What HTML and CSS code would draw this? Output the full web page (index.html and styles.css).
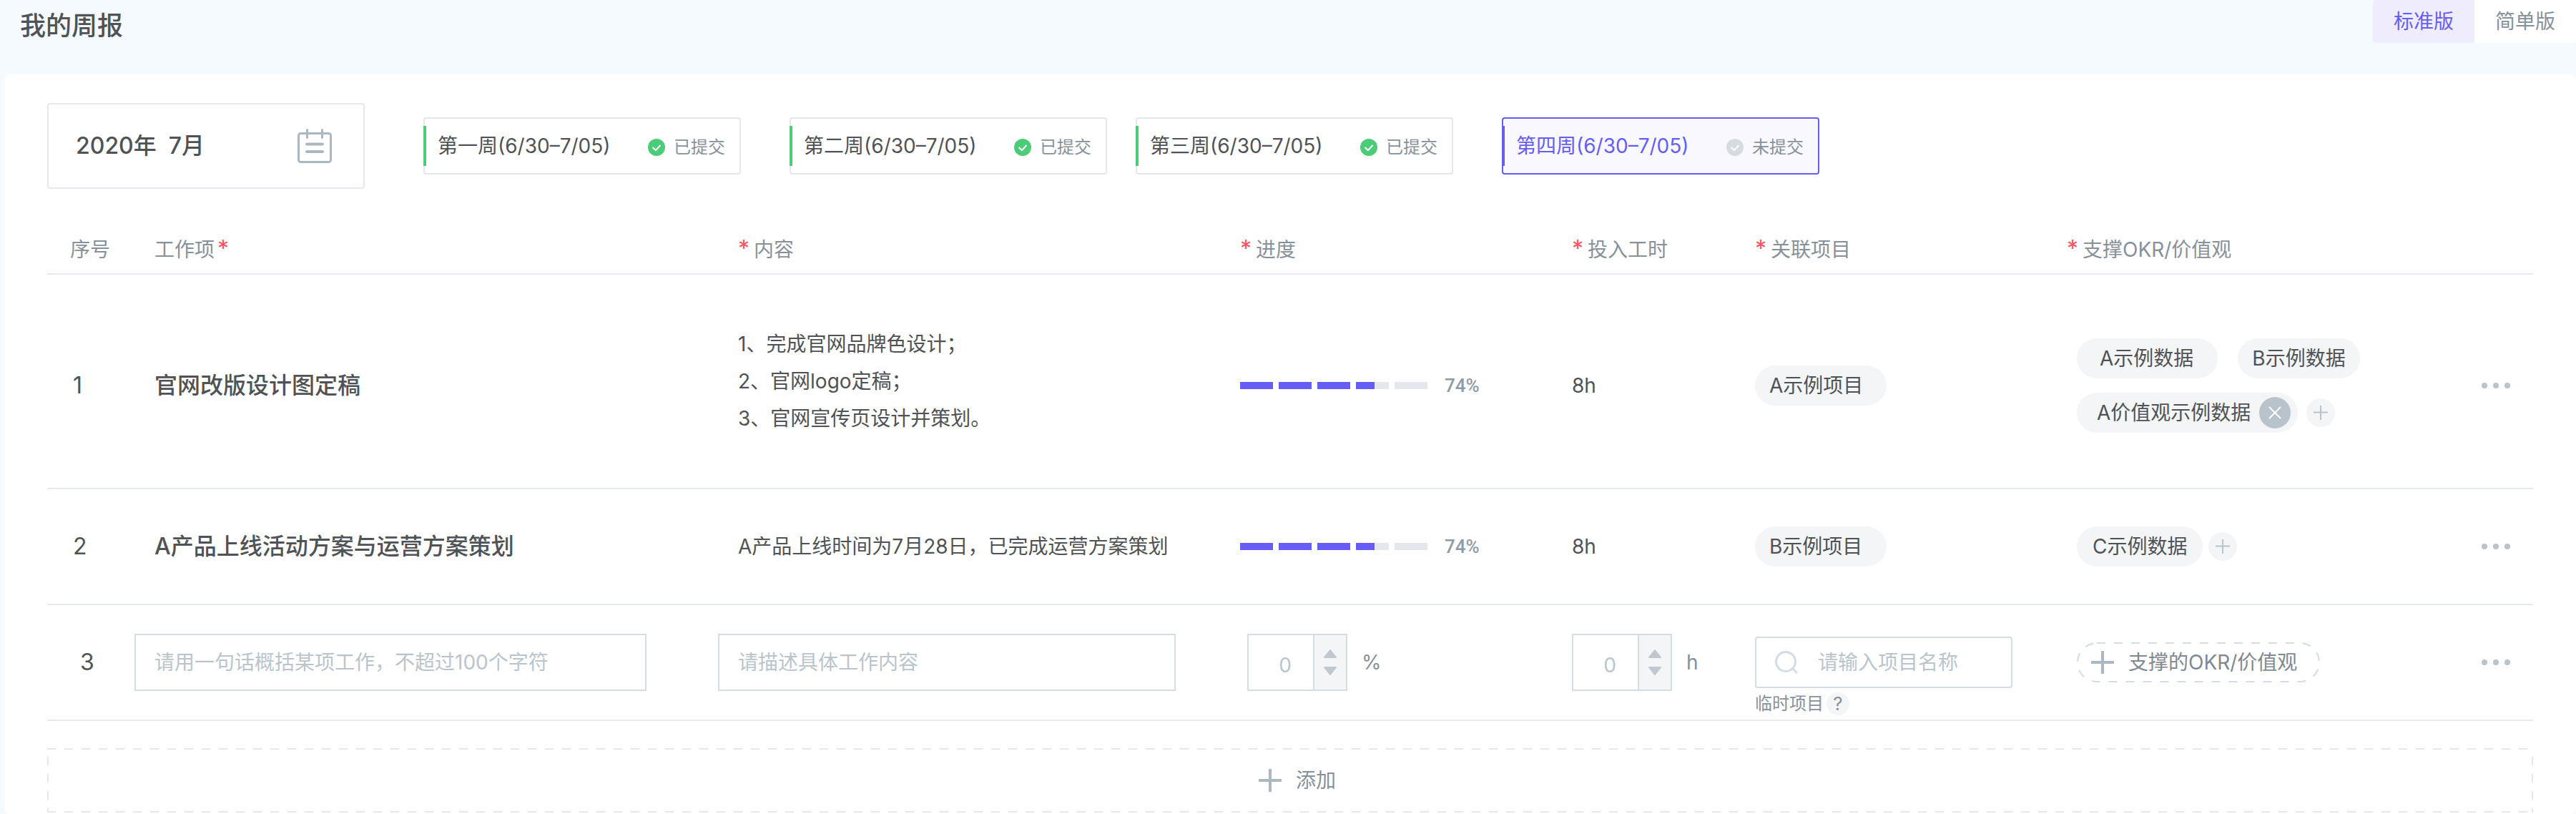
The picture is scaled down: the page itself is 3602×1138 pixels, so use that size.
FILE: index.html
```html
<!DOCTYPE html>
<html lang="zh-CN">
<head>
<meta charset="utf-8">
<title>我的周报</title>
<link rel="stylesheet" href="styles.css">
</head>
<body>
<header class="page-header">
  <h1 class="page-title">我的周报</h1>
  <nav class="modes">
    <button type="button" class="mode mode-active">标准版</button>
    <button type="button" class="mode">简单版</button>
  </nav>
</header>
<main class="card">
  <div class="toolbar">
    <button type="button" class="month">
      <span class="month-text">2020年&nbsp; 7月</span>
      <svg class="month-icon" viewBox="0 0 48 48" width="48" height="48" fill="none" stroke="#abb7c1" stroke-width="3" stroke-linecap="round"><rect x="1.500" y="6.500" width="45" height="40" rx="3"/><path d="M13.500 1.500v11M34.500 1.500v11"/><path d="M13 21.500h22M13 32h22" stroke-width="4"/></svg>
    </button>
    <div class="weeks">
      <button type="button" class="week"><span>第一周(6/30–7/05)</span><span class="status"><svg class="check" viewBox="0 0 24 24" width="24" height="24"><circle cx="12" cy="12" r="12"/><path d="M6.500 12l4.500 4 6.500-7"/></svg>已提交</span></button>
      <button type="button" class="week week-near"><span>第二周(6/30–7/05)</span><span class="status"><svg class="check" viewBox="0 0 24 24" width="24" height="24"><circle cx="12" cy="12" r="12"/><path d="M6.500 12l4.500 4 6.500-7"/></svg>已提交</span></button>
      <button type="button" class="week"><span>第三周(6/30–7/05)</span><span class="status"><svg class="check" viewBox="0 0 24 24" width="24" height="24"><circle cx="12" cy="12" r="12"/><path d="M6.500 12l4.500 4 6.500-7"/></svg>已提交</span></button>
      <button type="button" class="week week-active"><span>第四周(6/30–7/05)</span><span class="status"><svg class="check" viewBox="0 0 24 24" width="24" height="24"><circle cx="12" cy="12" r="12"/><path d="M6.500 12l4.500 4 6.500-7"/></svg>未提交</span></button>
    </div>
  </div>

  <table class="report">
    <colgroup>
      <col class="col-index"><col class="col-work"><col class="col-content"><col class="col-progress"><col class="col-hours"><col class="col-project"><col class="col-okr"><col class="col-more">
    </colgroup>
    <thead>
      <tr>
        <th class="index">序号</th>
        <th class="text-cell">工作项<span class="star star-after">*</span></th>
        <th class="text-cell"><span class="star">*</span>内容</th>
        <th><span class="star">*</span>进度</th>
        <th><span class="star">*</span>投入工时</th>
        <th><span class="star">*</span>关联项目</th>
        <th><span class="star">*</span>支撑OKR/价值观</th>
        <th></th>
      </tr>
    </thead>
    <tbody>
      <tr class="row-tall">
        <td class="index">1</td>
        <td class="text-cell work">官网改版设计图定稿</td>
        <td class="text-cell notes">1、完成官网品牌色设计；<br>2、官网logo定稿；<br>3、官网宣传页设计并策划。</td>
        <td><div class="progress"><i class="seg full"></i><i class="seg full"></i><i class="seg full"></i><i class="seg part"></i><i class="seg"></i><span class="percent">74%</span></div></td>
        <td>8h</td>
        <td><span class="tag tag-project">A示例项目</span></td>
        <td class="okr">
          <div class="tags">
            <div class="tag-line"><span class="tag tag-wide">A示例数据</span><span class="tag tag-spaced">B示例数据</span></div>
            <div class="tag-line"><span class="tag tag-closable">A价值观示例数据<button type="button" class="close" aria-label="移除"><svg viewBox="0 0 44 44" width="44" height="44"><circle cx="22" cy="22" r="22" fill="#b9c3cb"/><path d="M14 14l16 16M30 14L14 30" stroke="#fff" stroke-width="2"/></svg></button></span><button type="button" class="add-tag add-tag-far" aria-label="添加"><svg viewBox="0 0 40 40" width="40" height="40"><path d="M10 19.500h20M20 10v20" stroke="#b9c3cb" stroke-width="2"/></svg></button></div>
          </div>
        </td>
        <td><button type="button" class="more" aria-label="更多"><i></i><i></i><i></i></button></td>
      </tr>
      <tr class="row">
        <td class="index">2</td>
        <td class="text-cell work">A产品上线活动方案与运营方案策划</td>
        <td class="text-cell">A产品上线时间为7月28日，已完成运营方案策划</td>
        <td><div class="progress"><i class="seg full"></i><i class="seg full"></i><i class="seg full"></i><i class="seg part"></i><i class="seg"></i><span class="percent">74%</span></div></td>
        <td>8h</td>
        <td><span class="tag tag-project">B示例项目</span></td>
        <td class="okr"><div class="tag-line"><span class="tag tag-medium">C示例数据</span><button type="button" class="add-tag" aria-label="添加"><svg viewBox="0 0 40 40" width="40" height="40"><path d="M10 19.500h20M20 10v20" stroke="#b9c3cb" stroke-width="2"/></svg></button></div></td>
        <td><button type="button" class="more" aria-label="更多"><i></i><i></i><i></i></button></td>
      </tr>
      <tr class="row">
        <td class="index index-new">3</td>
        <td class="field-cell field-work"><input class="field" type="text" aria-label="工作项" placeholder="请用一句话概括某项工作，不超过100个字符"></td>
        <td class="field-cell field-content"><input class="field" type="text" aria-label="内容" placeholder="请描述具体工作内容"></td>
        <td class="cell-percent">
          <div class="stepper-line"><div class="stepper"><input type="text" id="percent" placeholder="0" aria-label="进度"><span class="arrows"><button type="button" aria-label="增加"><svg viewBox="0 0 20 12" width="20" height="12"><path d="M10 1L18 11H2z"/></svg></button><button type="button" aria-label="减少"><svg viewBox="0 0 20 12" width="20" height="12"><path d="M10 11L2 1h16z"/></svg></button></span></div><label for="percent">%</label></div>
        </td>
        <td>
          <div class="stepper-line"><div class="stepper"><input type="text" id="hours" placeholder="0" aria-label="投入工时"><span class="arrows"><button type="button" aria-label="增加"><svg viewBox="0 0 20 12" width="20" height="12"><path d="M10 1L18 11H2z"/></svg></button><button type="button" aria-label="减少"><svg viewBox="0 0 20 12" width="20" height="12"><path d="M10 11L2 1h16z"/></svg></button></span></div><label for="hours">h</label></div>
        </td>
        <td class="cell-search">
          <div class="search"><svg viewBox="0 0 32 32" width="32" height="32" fill="none" stroke="#d3dce4" stroke-width="3"><circle cx="15" cy="15" r="13.500"/><path d="M25 25l5 5" stroke-linecap="round"/></svg><input type="text" aria-label="关联项目" placeholder="请输入项目名称"></div>
          <div class="temp">临时项目<button type="button" class="help" aria-label="帮助">?</button></div>
        </td>
        <td class="okr"><button type="button" class="okr-add"><svg class="okr-outline" width="340" height="56" viewBox="0 0 340 56" fill="none" stroke="#d3dce4" stroke-width="2" stroke-dasharray="12 12"><rect x="1" y="1" width="338" height="54" rx="27"/></svg><svg viewBox="0 0 32 32" width="32" height="32"><path d="M0 16h32M16 0v32" stroke="#abb7c1" stroke-width="4"/></svg>支撑的OKR/价值观</button></td>
        <td><button type="button" class="more" aria-label="更多"><i></i><i></i><i></i></button></td>
      </tr>
    </tbody>
  </table>

  <button type="button" class="add-row"><svg viewBox="0 0 32 32" width="32" height="32"><path d="M0 16h32M16 0v32" stroke="#abb7c1" stroke-width="4"/></svg>添加</button>
</main>
</body>
</html>
```
FILE: styles.css
```css
* {
  box-sizing: border-box;
}

body {
  margin: 0;
  background: #f5fafe;
  color: #4f5357;
  font: 400 28px/40px Inter, "Noto Sans CJK SC", sans-serif;
}

button,
input {
  margin: 0;
  padding: 0;
  border: 0;
  background: none;
  color: inherit;
  font: inherit;
}

svg {
  display: block;
  flex: none;
}

.page-header {
  display: flex;
  align-items: flex-start;
  justify-content: space-between;
  height: 104px;
  padding-left: 28px;
}

.page-title {
  margin: 0;
  font-size: 36px;
  font-weight: 500;
  line-height: 72px;
}

.modes {
  display: flex;
  border-radius: 4px;
  overflow: hidden;
}

.mode {
  width: 142px;
  height: 60px;
  background: #fff;
  color: #87919b;
}

.mode-active {
  background: #efedfd;
  color: #665df5;
}

.card {
  margin-left: 6px;
  padding: 40px 60px 2px;
  border-radius: 8px;
  background: #fff;
}

.toolbar {
  display: flex;
  align-items: center;
  gap: 82px;
}

.month {
  display: flex;
  align-items: center;
  justify-content: space-between;
  width: 444px;
  height: 120px;
  padding: 0 44px 0 38px;
  border: 2px solid #e4e8ed;
  border-radius: 4px;
  font-size: 32px;
  font-weight: 500;
}

.weeks {
  display: flex;
  gap: 68px;
}

.week {
  position: relative;
  display: flex;
  align-items: center;
  justify-content: space-between;
  width: 444px;
  height: 80px;
  padding: 0 20px 0 18px;
  border: 2px solid #e4e8ed;
  border-radius: 4px;
}

.week::before {
  content: "";
  position: absolute;
  top: 10px;
  left: -2px;
  width: 4px;
  height: 56px;
  background: #4ccb79;
}

.week-near {
  margin-right: -28px;
}

.week-active {
  border-color: #665df5;
  background: #f9f8ff;
  color: #665df5;
}

.week-active::before {
  background: #665df5;
}

.status {
  display: flex;
  align-items: center;
  gap: 12px;
  padding-top: 4px;
  color: #87919b;
  font-size: 24px;
}

.check circle {
  fill: #4ccb79;
}

.check path {
  fill: none;
  stroke: #fff;
  stroke-width: 2;
}

.week-active .check circle {
  fill: #d5dce1;
}

.report {
  width: 100%;
  margin-top: 48px;
  border-spacing: 0;
  table-layout: fixed;
}

.col-index { width: 122px; }
.col-work { width: 816px; }
.col-content { width: 730px; }
.col-progress { width: 464px; }
.col-hours { width: 256px; }
.col-project { width: 436px; }
.col-okr { width: 580px; }
.col-more { width: 72px; }

th,
td {
  padding: 0;
  border-bottom: 2px solid #e6eaee;
  text-align: left;
  white-space: nowrap;
}

th {
  height: 72px;
  padding-top: 4px;
  color: #87919b;
  font-weight: 400;
}

.star {
  margin-right: 6px;
  color: #fa5563;
  font-size: 32px;
  line-height: 32px;
}

.star-after {
  margin: 0 0 0 4px;
}

.row-tall td {
  height: 300px;
  padding-top: 12px;
}

.row-tall .notes {
  padding-top: 0;
  line-height: 52px;
}

.row td {
  height: 162px;
}

th.index {
  padding-left: 32px;
}

td.index {
  padding-left: 36px;
  font-size: 32px;
}

.row .index-new {
  padding-left: 46px;
}

.text-cell {
  padding-left: 28px;
}

.work {
  font-size: 32px;
  font-weight: 500;
}

.progress {
  display: flex;
  align-items: center;
  gap: 8px;
}

.seg {
  width: 46px;
  height: 10px;
  background: #e4e8ed;
}

.full {
  background: #665df5;
}

.part {
  background: linear-gradient(90deg, #665df5 26px, #e4e8ed 26px);
}

.percent {
  margin-left: 16px;
  color: #909aa3;
  font-family: Roboto, sans-serif;
  font-size: 26px;
  font-weight: 500;
}

.tag {
  display: inline-flex;
  align-items: center;
  height: 56px;
  padding: 0 20px;
  border-radius: 28px;
  background: #f4f5f7;
}

.tag-project {
  width: 184px;
}

.tag-wide {
  padding: 0 34px 0 32px;
}

.tag-medium {
  padding: 0 22px;
}

.tag-spaced {
  margin-left: 20px;
}

.tag-closable {
  gap: 12px;
  padding: 0 10px 0 28px;
}

.okr {
  padding-left: 14px;
}

.tags {
  display: flex;
  flex-direction: column;
  gap: 20px;
}

.tag-line {
  display: flex;
  align-items: center;
  gap: 8px;
}

.add-tag {
  width: 40px;
  height: 40px;
  border-radius: 50%;
  background: #f4f5f7;
}

.add-tag-far {
  margin-left: 4px;
}

.more {
  display: flex;
  gap: 8px;
}

.more i {
  width: 8px;
  height: 8px;
  border-radius: 50%;
  background: #b9c3cb;
}

::placeholder {
  color: #bac4cd;
  opacity: 1;
}

.field {
  display: block;
  width: 100%;
  height: 80px;
  padding: 0 26px;
  border: 2px solid #d5dce2;
}

.field-work {
  padding-right: 100px;
}

.field-content {
  padding-right: 90px;
}

.cell-percent {
  padding-left: 10px;
}

.stepper-line {
  display: flex;
  align-items: center;
  gap: 20px;
  color: #87919b;
}

.stepper {
  display: flex;
  width: 140px;
  height: 80px;
  border: 2px solid #d5dce2;
}

.stepper input {
  flex: 1;
  min-width: 0;
  padding: 8px 0 0 12px;
  text-align: center;
}

.arrows {
  display: flex;
  flex-direction: column;
  align-items: center;
  justify-content: center;
  gap: 12px;
  width: 46px;
  border-left: 2px solid #d5dce2;
  background: #f4f5f7;
}

.arrows path {
  fill: #c0c7cf;
  stroke: #c0c7cf;
  stroke-width: 2;
  stroke-linejoin: round;
}

.row .cell-search {
  padding-top: 44px;
  vertical-align: top;
}

.search {
  display: flex;
  align-items: center;
  gap: 28px;
  width: 360px;
  height: 72px;
  padding: 0 26px;
  border: 2px solid #d5dce2;
  border-radius: 4px;
}

.search input {
  flex: 1;
  min-width: 0;
}

.temp {
  display: flex;
  align-items: center;
  gap: 4px;
  margin-top: 6px;
  color: #87919b;
  font-size: 24px;
  line-height: 32px;
}

.help {
  width: 32px;
  height: 32px;
  border-radius: 50%;
  background: #f4f5f7;
  font-size: 26px;
}

.okr-add {
  position: relative;
  display: flex;
  align-items: center;
  gap: 20px;
  width: 340px;
  height: 56px;
  padding-left: 20px;
  color: #7f8993;
}

.okr-outline {
  position: absolute;
  inset: 0;
}

.add-row {
  --dash: #e4e8ed 0 12px, transparent 12px 24px;
  display: flex;
  align-items: center;
  justify-content: center;
  gap: 20px;
  width: 100%;
  height: 90px;
  margin-top: 38px;
  padding-left: 20px;
  background:
    repeating-linear-gradient(90deg, var(--dash)) top / 100% 2px no-repeat,
    repeating-linear-gradient(90deg, var(--dash)) bottom / 100% 2px no-repeat,
    repeating-linear-gradient(180deg, transparent 0 12px, #e4e8ed 12px 24px) left / 2px 100% no-repeat,
    repeating-linear-gradient(180deg, transparent 0 12px, #e4e8ed 12px 24px) right / 2px 100% no-repeat;
  color: #87919b;
}
```
